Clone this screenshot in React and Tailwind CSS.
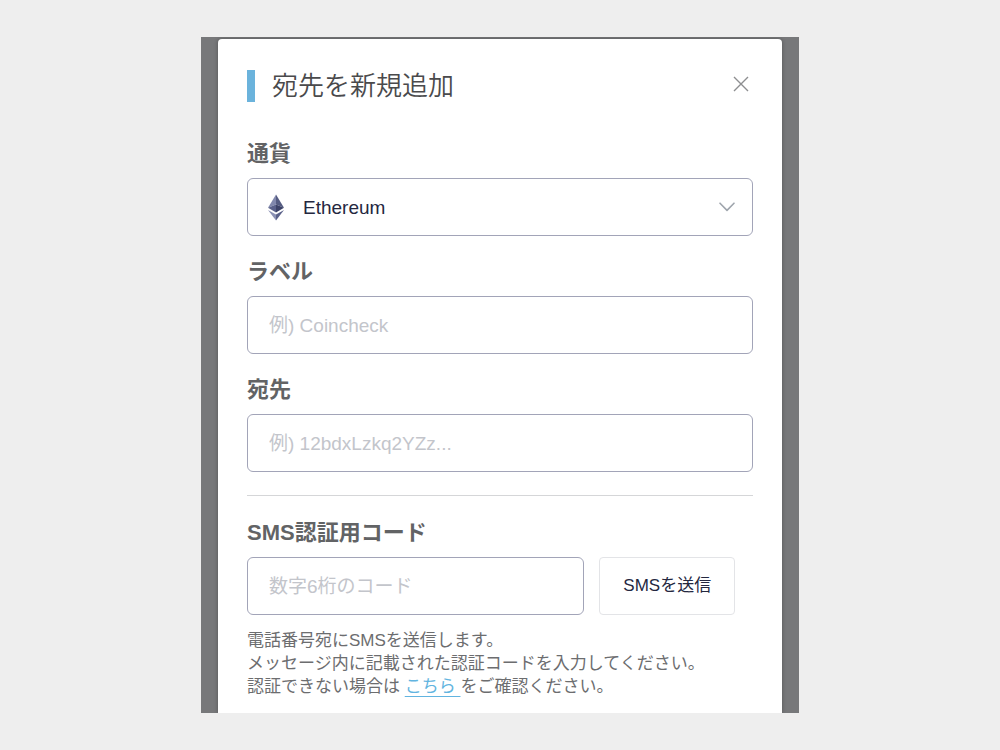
const inputClass =
  "h-[58px] rounded-md border border-[#a2a4b8] bg-white px-[21px] pt-[2px] text-[19px] text-[#24273f] outline-none placeholder:text-[#c3c5cb]";

function Label({ htmlFor, children }) {
  return (
    <label htmlFor={htmlFor} className="mb-2 block text-[22px] font-bold leading-8 text-[#626365]">
      {children}
    </label>
  );
}

function EthereumIcon() {
  return (
    <svg viewBox="0 0 18 27" className="h-[27px] w-[18px] shrink-0" aria-hidden="true">
      <path d="M9 0.5 1 13.8 9 10.5z" fill="#8188ad" />
      <path d="M9 0.5 17 13.8 9 10.5z" fill="#555c82" />
      <path d="M1 13.8 9 10.5v8z" fill="#59608a" />
      <path d="M17 13.8 9 10.5v8z" fill="#3c4268" />
      <path d="M1 16 9 20.6V26.5z" fill="#8c92b5" />
      <path d="M17 16 9 20.6V26.5z" fill="#5a6189" />
    </svg>
  );
}

function CurrencySelect() {
  return (
    <div className="relative">
      <div className="pointer-events-none absolute inset-0 flex items-center justify-between pl-5 pr-[18px]">
        <EthereumIcon />
        <svg viewBox="0 0 16 10" className="h-[10px] w-4" fill="none" stroke="#9fa5ad" strokeWidth="1.6" aria-hidden="true">
          <path d="M1 1.2 8 8.4 15 1.2" strokeLinecap="round" strokeLinejoin="round" />
        </svg>
      </div>
      <select
        id="currency"
        className="block h-[58px] w-full appearance-none rounded-md border border-[#a2a4b8] bg-transparent pl-[55px] pr-12 pt-[2px] text-[19px] text-[#24273f] outline-none"
      >
        <option>Ethereum</option>
      </select>
    </div>
  );
}

export default function App() {
  return (
    <div className={'min-h-screen bg-[#eeeeee] py-[37px] font-["Liberation_Sans","Noto_Sans_CJK_JP",sans-serif]'}>
      <div className="mx-auto w-full max-w-[598px] overflow-hidden bg-[#77787a] px-[17px] pt-[2px]">
        <main className="rounded-t bg-white px-[29px] pb-[15px] pt-[31px] shadow-[0_0_4px_rgba(0,0,0,0.3)]">
          <header className="mb-9 flex items-start justify-between">
            <h1 className="border-l-8 border-[#6bb3dc] pl-[17px] text-[26px] font-[350] leading-8 text-[#4a4a4c]">
              宛先を新規追加
            </h1>
            <button type="button" aria-label="閉じる" className="flex h-7 w-6 items-center justify-center">
              <svg viewBox="0 0 16 16" className="size-4" fill="none" stroke="#8d8e90" strokeWidth="1.4" aria-hidden="true">
                <path d="M1 1 15 15M15 1 1 15" />
              </svg>
            </button>
          </header>

          <form>
            <div className="flex flex-col gap-5">
              <div>
                <Label htmlFor="currency">通貨</Label>
                <CurrencySelect />
              </div>
              <div>
                <Label htmlFor="label">ラベル</Label>
                <input id="label" type="text" placeholder="例) Coincheck" className={`block w-full ${inputClass}`} />
              </div>
              <div>
                <Label htmlFor="address">宛先</Label>
                <input id="address" type="text" placeholder="例) 12bdxLzkq2YZz..." className={`block w-full ${inputClass}`} />
              </div>
            </div>

            <hr className="mb-[21px] mt-[23px] border-[#d5d6d8]" />

            <Label htmlFor="sms-code">SMS認証用コード</Label>
            <div className="flex gap-[15px]">
              <input id="sms-code" type="text" placeholder="数字6桁のコード" className={`w-2/3 min-w-0 ${inputClass}`} />
              <button type="button" className="h-[58px] rounded border border-[#e3e4e7] bg-white px-[23px] text-[17px] whitespace-nowrap text-[#24273f]">
                SMSを送信
              </button>
            </div>
            <p className="mt-[14px] text-[17px] leading-[23px] text-[#6c6d6f]">
              電話番号宛にSMSを送信します。
              <br />
              メッセージ内に記載された認証コードを入力してください。
              <br />
              認証できない場合は{" "}
              <a href="#" className="text-[#62b4e0] underline underline-offset-4">
                こちら&nbsp;
              </a>
              をご確認ください。
            </p>
          </form>
        </main>
      </div>
    </div>
  );
}
